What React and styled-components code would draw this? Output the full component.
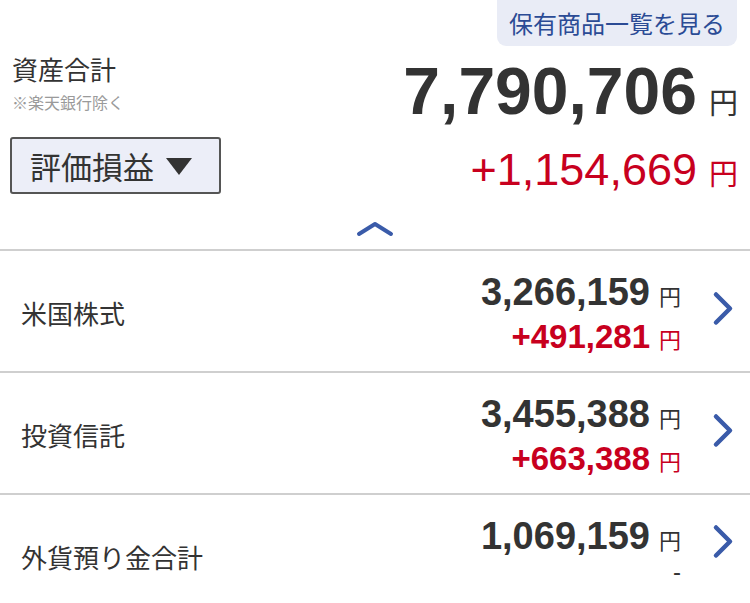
import React from "react";
import styled, { createGlobalStyle } from "styled-components";

const Global = createGlobalStyle`
  html, body { margin: 0; padding: 0; background: #fff; }
  body { width: 750px; overflow: hidden; font-family: "Noto Sans CJK JP", "Liberation Sans", sans-serif; color: #333; }
`;

const Page = styled.div`
  width: 750px;
  background: #fff;
`;

const TopBar = styled.div`
  display: flex;
  justify-content: flex-end;
  padding-right: 13px;
`;

const LinkButton = styled.a`
  display: block;
  background: #e9ecf6;
  color: #2b4b95;
  font-size: 24px;
  line-height: 24px;
  padding: 11px 12px 11px 12px;
  border-radius: 0 0 9px 9px;
  text-decoration: none;
`;

const SummaryRow = styled.div`
  display: flex;
  justify-content: space-between;
  align-items: flex-start;
  padding: 0 12px 0 ${(p) => p.$left || 12}px;
`;

const LabelBlock = styled.div`
  display: flex;
  flex-direction: column;
  margin-top: 10px;
`;

const TotalLabel = styled.div`
  font-size: 26px;
  line-height: 26px;
  color: #333;
`;

const Note = styled.div`
  font-size: 16px;
  line-height: 16px;
  color: #9a9a9a;
  margin-top: 12px;
`;

const Amount = styled.div`
  display: flex;
  align-items: baseline;
  gap: ${(p) => p.$gap || 12}px;
  margin-top: ${(p) => p.$top || 0}px;
  color: ${(p) => (p.$red ? "#c8001e" : "#333")};
`;

const Number = styled.span`
  font-family: "Liberation Sans", "Noto Sans", sans-serif;
  font-size: ${(p) => p.$size}px;
  line-height: ${(p) => p.$size}px;
  font-weight: ${(p) => (p.$bold ? 700 : 400)};
`;

const Yen = styled.span`
  font-family: "Noto Sans CJK JP", sans-serif;
  font-size: ${(p) => p.$size}px;
  line-height: ${(p) => p.$size}px;
  font-weight: 400;
`;

const Dropdown = styled.button`
  display: flex;
  align-items: center;
  gap: 12px;
  margin-top: 13px;
  height: 57px;
  width: 211px;
  box-sizing: border-box;
  padding: 0 0 0 18px;
  background: #eceef8;
  border: 2px solid #555;
  border-radius: 3px;
  font-family: "Noto Sans CJK JP", sans-serif;
  font-size: 31px;
  line-height: 31px;
  color: #333;
  cursor: pointer;
`;

const Triangle = styled.span`
  width: 0;
  height: 0;
  border-left: 13px solid transparent;
  border-right: 13px solid transparent;
  border-top: 17px solid #333;
  margin-top: 2px;
`;

const Toggle = styled.div`
  display: flex;
  justify-content: center;
  padding: 27px 0 12px;
`;

const List = styled.div`
  border-top: 2px solid #cfcfcf;
`;

const Row = styled.div`
  display: flex;
  align-items: flex-start;
  height: 120px;
  box-sizing: content-box;
  border-bottom: 2px solid #cfcfcf;
  padding: 0 15px 0 21px;
`;

const RowLabel = styled.div`
  flex: 1;
  font-size: 26px;
  line-height: 26px;
  color: #333;
  align-self: center;
  margin-top: 4px;
`;

const Values = styled.div`
  display: flex;
  flex-direction: column;
  align-items: flex-end;
  padding-top: 22px;
`;

const Dash = styled.div`
  font-family: "Liberation Sans", sans-serif;
  font-size: 24px;
  line-height: 24px;
  margin-top: 5px;
  color: #333;
`;

const Chevron = styled.svg`
  align-self: center;
  margin-left: 31px;
  margin-top: ${(p) => p.$top || 0}px;
`;

const ChevronRight = ({ top }) => (
  <Chevron $top={top} width="23" height="35" viewBox="0 0 23 35">
    <polyline points="4,3.5 18,17.5 4,31.5" fill="none" stroke="#3a5ba9" strokeWidth="4.5" strokeLinecap="round" strokeLinejoin="round" />
  </Chevron>
);

const rows = [
  { label: "米国株式", value: "3,266,159", gain: "+491,281" },
  { label: "投資信託", value: "3,455,388", gain: "+663,388" },
  { label: "外貨預り金合計", value: "1,069,159", gain: null },
];

export default function App() {
  return (
    <Page>
      <Global />
      <TopBar>
        <LinkButton href="#">保有商品一覧を見る</LinkButton>
      </TopBar>
      <SummaryRow>
        <LabelBlock>
          <TotalLabel>資産合計</TotalLabel>
          <Note>※楽天銀行除く</Note>
        </LabelBlock>
        <Amount $top={12} $gap={12}>
          <Number $size={66} $bold>7,790,706</Number>
          <Yen $size={29}>円</Yen>
        </Amount>
      </SummaryRow>
      <SummaryRow $left={10}>
        <Dropdown>
          評価損益
          <Triangle />
        </Dropdown>
        <Amount $top={23} $gap={12} $red>
          <Number $size={45}>+1,154,669</Number>
          <Yen $size={29}>円</Yen>
        </Amount>
      </SummaryRow>
      <Toggle>
        <svg width="38" height="16" viewBox="0 0 38 16">
          <polyline points="3,13 19,3 35,13" fill="none" stroke="#3a5ba9" strokeWidth="4" strokeLinecap="round" strokeLinejoin="round" />
        </svg>
      </Toggle>
      <List>
        {rows.map((r) => (
          <Row key={r.label}>
            <RowLabel>{r.label}</RowLabel>
            <Values>
              <Amount $gap={9}>
                <Number $size={38} $bold>{r.value}</Number>
                <Yen $size={22}>円</Yen>
              </Amount>
              {r.gain ? (
                <Amount $gap={9} $top={9} $red>
                  <Number $size={33} $bold>{r.gain}</Number>
                  <Yen $size={22}>円</Yen>
                </Amount>
              ) : (
                <Dash>-</Dash>
              )}
            </Values>
            <ChevronRight top={r.gain ? -6 : -28} />
          </Row>
        ))}
      </List>
    </Page>
  );
}
